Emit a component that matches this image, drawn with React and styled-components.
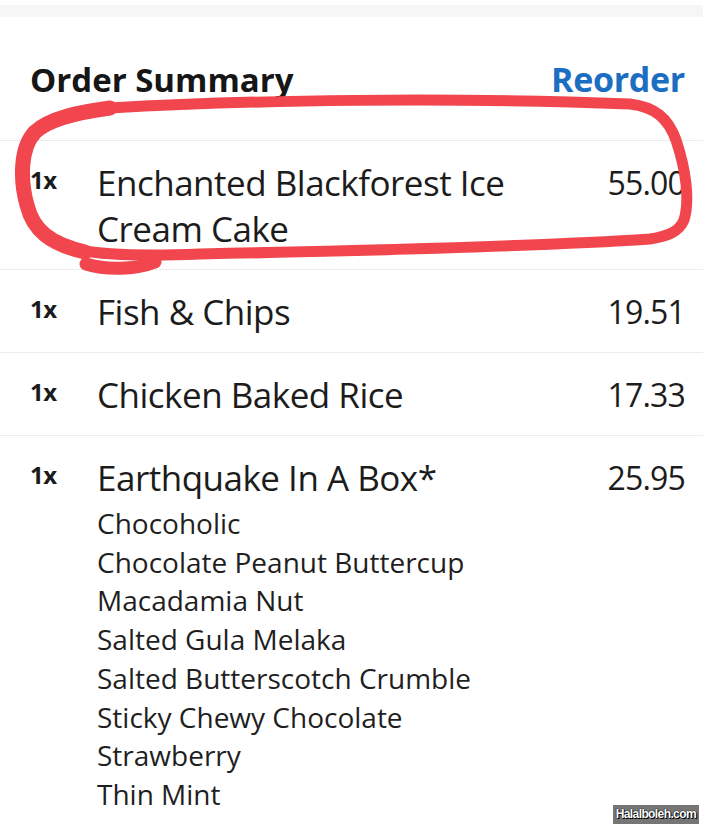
import React from 'react'
import styled, { createGlobalStyle } from 'styled-components'

const GlobalStyle = createGlobalStyle`
  html, body {
    margin: 0;
    padding: 0;
    background: #fff;
  }
  body {
    font-family: "Open Sans", "Noto Sans", sans-serif;
    color: #1c1c1c;
  }
`

const Page = styled.div`
  position: relative;
  width: 703px;
  height: 828px;
  overflow: hidden;
  background: #fff;
`

const TopStrip = styled.div`
  margin-top: 5px;
  height: 12px;
  background: #f6f6f6;
`

const Header = styled.div`
  display: flex;
  justify-content: space-between;
  align-items: baseline;
  padding: 42px 18px 40px 30px;
`

const Title = styled.h2`
  margin: 0;
  font-size: 33px;
  line-height: 40px;
  font-weight: 700;
  letter-spacing: 0;
  color: #161616;
`

const LinkButton = styled.a`
  font-size: 34px;
  line-height: 40px;
  font-weight: 700;
  letter-spacing: -0.3px;
  color: #1b6ec2;
  text-decoration: none;
`

const Row = styled.div`
  display: grid;
  grid-template-columns: 67px 1fr auto;
  column-gap: 20px;
  padding: 19px 18px 17px 30px;
  border-top: 1.5px solid #ececec;
`

const Qty = styled.span`
  font-size: 24px;
  line-height: 39px;
  font-weight: 700;
  letter-spacing: -0.4px;
  color: #1a1a1a;
`

const ItemBody = styled.div`
  margin-left: -20px;
`

const Name = styled.div`
  font-size: 35px;
  line-height: 46px;
  letter-spacing: -0.5px;
  color: #1c1c1c;
`

const Price = styled.div`
  font-size: 32px;
  line-height: 46px;
  letter-spacing: -0.8px;
  color: #1c1c1c;
  text-align: right;
`

const Options = styled.ul`
  list-style: none;
  margin: 3px 0 0;
  padding: 0;
`

const Option = styled.li`
  font-size: 28px;
  line-height: 38.7px;
  color: #1f1f1f;
`

const Scribble = styled.svg`
  position: absolute;
  top: 0;
  left: 0;
  pointer-events: none;
`

const Watermark = styled.div`
  position: absolute;
  right: 4px;
  bottom: 4px;
  padding: 2px 3px;
  background: #767676;
  color: #fff;
  font-family: "Liberation Sans Narrow", "Liberation Sans", sans-serif;
  font-size: 12px;
  line-height: 15px;
  font-weight: 700;
  letter-spacing: -0.6px;
  text-shadow: 0 0 1px #000, 0 0 1px #000, 1px 1px 0 #000;
`

const items = [
  { qty: 1, name: 'Enchanted Blackforest Ice Cream Cake', price: '55.00' },
  { qty: 1, name: 'Fish & Chips', price: '19.51' },
  { qty: 1, name: 'Chicken Baked Rice', price: '17.33' },
  {
    qty: 1,
    name: 'Earthquake In A Box*',
    price: '25.95',
    options: [
      'Chocoholic',
      'Chocolate Peanut Buttercup',
      'Macadamia Nut',
      'Salted Gula Melaka',
      'Salted Butterscotch Crumble',
      'Sticky Chewy Chocolate',
      'Strawberry',
      'Thin Mint',
    ],
  },
]

const App = () => {
  return (
    <Page>
      <GlobalStyle />
      <TopStrip />
      <Header>
        <Title>Order Summary</Title>
        <LinkButton href="#">Reorder</LinkButton>
      </Header>

      {items.map((item, i) => (
        <Row key={i}>
          <Qty>{item.qty}x</Qty>
          <ItemBody>
            <Name>{item.name}</Name>
            {item.options && (
              <Options>
                {item.options.map(o => <Option key={o}>{o}</Option>)}
              </Options>
            )}
          </ItemBody>
          <Price>{item.price}</Price>
        </Row>
      ))}

      {/* hand drawn red circle around first item */}
      <Scribble width="703" height="828" viewBox="0 0 703 828">
        <g fill="none" stroke="#f1464e" strokeLinecap="round" strokeLinejoin="round">
          <path strokeWidth="11" d="M 110 108 C 250 100, 450 97, 630 104 C 655 107, 668 118, 676 140 C 686 170, 690 200, 684 220 C 679 232, 668 236, 650 239 C 560 245, 400 250, 200 254 C 150 256, 110 256, 80 250" />
          <path strokeWidth="15" d="M 110 108 C 80 112, 50 118, 35 132 C 20 148, 20 180, 27 205 C 33 230, 50 244, 85 252" />
          <path strokeWidth="13" d="M 86 264 C 105 270, 135 270, 155 262" />
        </g>
      </Scribble>

      <Watermark>Halalboleh.com</Watermark>
    </Page>
  )
}

export default App
